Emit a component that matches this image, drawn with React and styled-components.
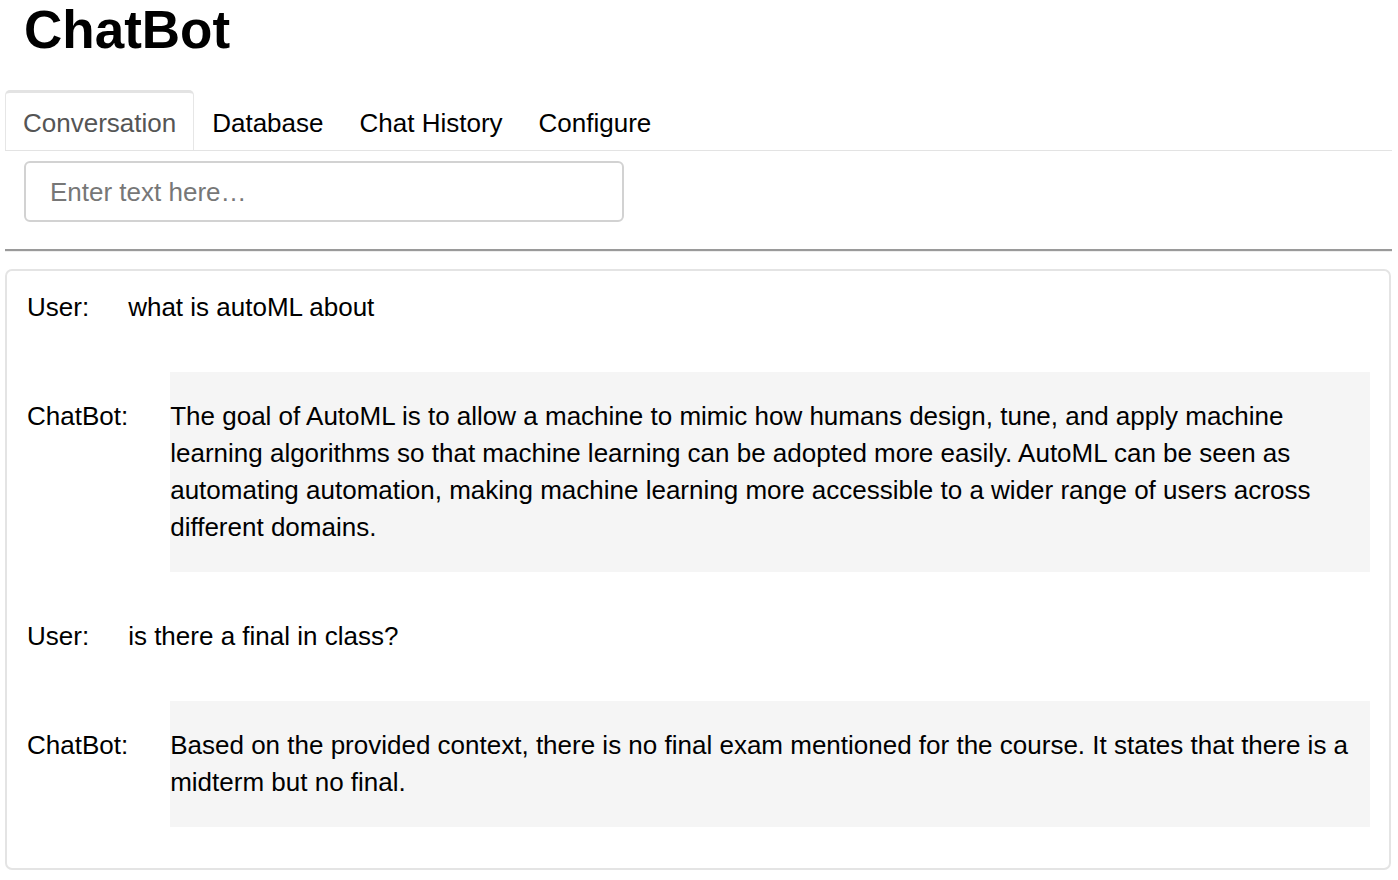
import React, { useState } from "react";
import styled, { createGlobalStyle } from "styled-components";

const GlobalStyle = createGlobalStyle`
  body {
    margin: 0;
    background: #fff;
    color: #000;
    font-family: "Liberation Sans", Helvetica, Arial, sans-serif;
  }
`;

const tabs = ["Conversation", "Database", "Chat History", "Configure"];

const messages = [
  { from: "User", text: "what is autoML about" },
  {
    from: "ChatBot",
    text: "The goal of AutoML is to allow a machine to mimic how humans design, tune, and apply machine learning algorithms so that machine learning can be adopted more easily. AutoML can be seen as automating automation, making machine learning more accessible to a wider range of users across different domains.",
  },
  { from: "User", text: "is there a final in class?" },
  {
    from: "ChatBot",
    text: "Based on the provided context, there is no final exam mentioned for the course. It states that there is a midterm but no final.",
  },
];

function App() {
  const [active, setActive] = useState(0);
  const [value, setValue] = useState("");

  return (
    <Page>
      <GlobalStyle />
      <Title>ChatBot</Title>
      <TabList>
        {tabs.map((t, i) => (
          <Tab key={t} active={i === active} onClick={() => setActive(i)}>
            {t}
          </Tab>
        ))}
      </TabList>
      <InputWrap>
        <TextInput
          placeholder="Enter text here…"
          value={value}
          onChange={(e) => setValue(e.target.value)}
        />
      </InputWrap>
      <Divider />
      <ChatBox>
        {messages.map((m, i) => {
          const bot = m.from === "ChatBot";
          return (
            <Row key={i} bot={bot}>
              <Name bot={bot}>{m.from}:</Name>
              <Message bot={bot}>{m.text}</Message>
            </Row>
          );
        })}
      </ChatBox>
    </Page>
  );
}

const Page = styled.div`
  padding: 0 6px 0 5px;
`;

const Title = styled.h1`
  margin: 1px 0 31px 19px;
  font-size: 53px;
  line-height: 58px;
  font-weight: 700;
`;

const TabList = styled.div`
  display: flex;
  border-bottom: 1px solid #e3e3e3;
`;

const Tab = styled.div`
  padding: 15px 17px 12px;
  font-size: 26px;
  line-height: 30px;
  cursor: pointer;
  color: ${(p) => (p.active ? "#555" : "#000")};
  border: 1px solid ${(p) => (p.active ? "#e6e6e6" : "transparent")};
  border-top: 3px solid ${(p) => (p.active ? "#e3e3e3" : "transparent")};
  border-bottom: none;
  border-radius: 5px 5px 0 0;
`;

const InputWrap = styled.div`
  padding: 10px 0 0 19px;
`;

const TextInput = styled.input`
  box-sizing: border-box;
  width: 600px;
  height: 61px;
  padding: 2px 24px 0;
  border: 2px solid #d2d2d2;
  border-radius: 6px;
  font-family: inherit;
  font-size: 26px;
  color: #000;
  outline: none;

  &::placeholder {
    color: #777;
  }
`;

const Divider = styled.div`
  margin-top: 27px;
  height: 2px;
  background: #9a9a9a;
  border-bottom: 1px solid #eee;
`;

const ChatBox = styled.div`
  margin-top: 17px;
  box-sizing: border-box;
  width: 1386px;
  display: flex;
  flex-direction: column;
  gap: 46px;
  padding: 18px 19px 41px 20px;
  border: 2px solid #e4e4e4;
  border-radius: 7px;
`;

const Row = styled.div`
  display: flex;
  align-items: flex-start;
  gap: ${(p) => (p.bot ? "42px" : "39px")};
  font-size: 26px;
  line-height: 37px;
`;

const Name = styled.div`
  flex: none;
  padding: ${(p) => (p.bot ? "26px 0" : "0")};
`;

const Message = styled.div`
  flex: 1;
  padding: ${(p) => (p.bot ? "26px 0" : "0")};
  background: ${(p) => (p.bot ? "#f5f5f5" : "transparent")};
`;

export default App;
